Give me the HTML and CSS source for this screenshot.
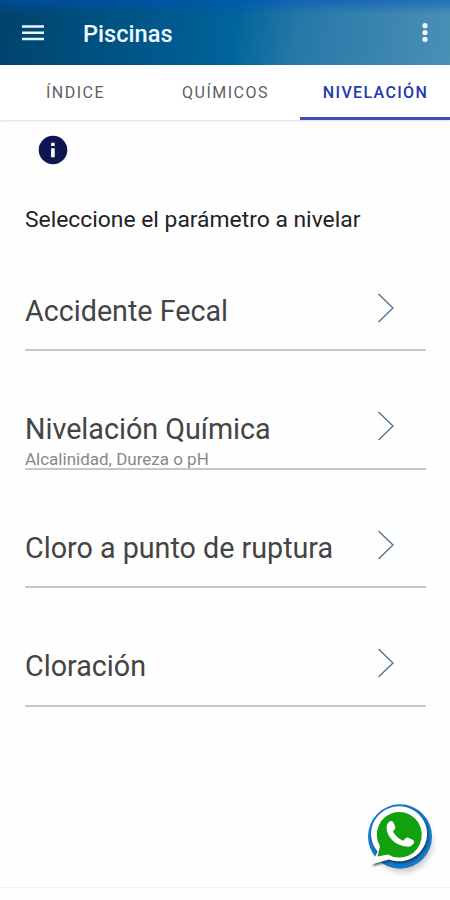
FILE: index.html
```html
<!DOCTYPE html>
<html lang="es">
<head>
  <meta charset="UTF-8" />
  <meta name="viewport" content="width=device-width, initial-scale=1.0" />
  <title>Piscinas</title>
  <link rel="stylesheet" href="styles.css">
</head>
<body>
  <header class="app-bar">
    <svg class="menu-icon" width="22" height="16" viewBox="0 0 22 16">
      <path d="M0 1.5h22M0 7.8h22M0 14h22" stroke="#e9f3fa" stroke-width="2.4"/>
    </svg>
    <h1>Piscinas</h1>
    <svg class="more-icon" width="6" height="20" viewBox="0 0 6 20" fill="#f1f7fa">
      <circle cx="3" cy="2.7" r="2.6"/>
      <circle cx="3" cy="9.5" r="2.6"/>
      <circle cx="3" cy="16.3" r="2.6"/>
    </svg>
  </header>

  <nav class="tabs">
    <a class="tab"><span>ÍNDICE</span></a>
    <a class="tab"><span>QUÍMICOS</span></a>
    <a class="tab active"><span>NIVELACIÓN</span></a>
  </nav>

  <main class="content">
    <svg class="info-icon" width="30" height="30" viewBox="0 0 30 30">
      <circle cx="15" cy="15" r="14.3" fill="#0d1650"/>
      <path d="M13.1 7.8h3.6v3.3h-3.6zM13.1 13.2h3.6v9h-3.6z" fill="#fff"/>
    </svg>
    <p class="prompt">Seleccione el parámetro a nivelar</p>

    <div class="list">
      <div class="item">
        <div class="item-title">Accidente Fecal</div>
        <svg class="chevron" width="18" height="30" viewBox="0 0 18 30"><path d="M1.5 1l14.5 14L1.5 29"/></svg>
      </div>
      <div class="item">
        <div class="item-title">Nivelación Química</div>
        <div class="item-sub">Alcalinidad, Dureza o pH</div>
        <svg class="chevron" width="18" height="30" viewBox="0 0 18 30"><path d="M1.5 1l14.5 14L1.5 29"/></svg>
      </div>
      <div class="item">
        <div class="item-title">Cloro a punto de ruptura</div>
        <svg class="chevron" width="18" height="30" viewBox="0 0 18 30"><path d="M1.5 1l14.5 14L1.5 29"/></svg>
      </div>
      <div class="item">
        <div class="item-title">Cloración</div>
        <svg class="chevron" width="18" height="30" viewBox="0 0 18 30"><path d="M1.5 1l14.5 14L1.5 29"/></svg>
      </div>
    </div>
  </main>

  <a class="whatsapp">
    <svg width="80" height="80" viewBox="0 0 80 80">
      <defs>
        <filter id="soft" x="-30%" y="-30%" width="160%" height="160%"><feGaussianBlur stdDeviation="3"/></filter>
        <filter id="edge" x="-30%" y="-30%" width="160%" height="160%"><feGaussianBlur stdDeviation="1"/></filter>
        <path id="bubble" d="M11 64.5L17.1 51.5A28 27.500 0 1 1 28.500 59.500Z"/>
      </defs>
      <circle cx="43" cy="43" r="29" fill="#000" opacity=".22" filter="url(#soft)"/>
      <ellipse cx="40" cy="36.5" rx="32" ry="32.3" fill="#1678cc"/>
      <use href="#bubble" x="1.5" y="1.8" fill="#123" opacity=".7" filter="url(#edge)"/>
      <use href="#bubble" x="0.5" fill="#fff"/>
      <path d="M17.5 56.5L20 46.5A22.5 22.8 0 1 1 28 54.5Z" fill="#11a010"/>
      <path d="M29.5 21.5q2.800-1.500 4 1l1.700 4.200q.6 1.700-.8 3l-1.500 1.700q3.400 6.200 10.200 9.300l2.500-2.500q1.200-1.100 2.700-.4l4.800 2.300q1.700.9.800 3-2.300 4.200-7.500 3.500Q31.500 44.500 27 31.500q-1.600-6.800 2.500-10z" fill="#fff"/>
    </svg>
  </a>
  <footer class="bottom-bar"></footer>
</body>
</html>
```
FILE: styles.css
```css
* { box-sizing: border-box; }
body {
  margin: 0;
  height: 900px;
  display: flex;
  flex-direction: column;
  font-family: Roboto, sans-serif;
  background-color: #fefefe;
  overflow: hidden;
}
.app-bar {
  height: 64.5px;
  flex: none;
  display: flex;
  align-items: center;
  padding: 1px 22px 0;
  background:
    linear-gradient(to bottom, rgba(0, 80, 190, 0.5), rgba(0, 80, 190, 0) 14px),
    linear-gradient(100deg, #00436c 0%, #005c92 42%, #00659b 52%, #2778a8 66%, #4a90b5 100%);
  color: #f1f8fd;
}
.app-bar h1 {
  margin: 3px 0 0 39px;
  font-size: 23.6px;
  font-weight: 500;
}
.more-icon {
  margin-left: auto;
}
.tabs {
  height: 55px;
  flex: none;
  display: flex;
  background-color: #fff;
  box-shadow: 0 1px 2px rgba(0, 0, 0, 0.14);
}
.tab {
  flex: 1;
  display: flex;
  align-items: center;
  justify-content: center;
  padding: 4px 0 0 1px;
  border-bottom: 3px solid transparent;
  font-size: 16px;
  font-weight: 400;
  letter-spacing: 1.5px;
  color: #606060;
}
.tab.active {
  font-weight: 500;
  letter-spacing: 1.35px;
  color: #2339ae;
  border-bottom-color: #3d51b2;
}
.content {
  flex: 1;
  padding: 15.5px 24px 0 25px;
}
.info-icon {
  display: block;
  margin-left: 13px;
}
.prompt {
  margin: 40px 0 0;
  font-size: 22.85px;
  line-height: 30px;
  color: #222;
  white-space: nowrap;
}
.list {
  margin-top: -2px;
}
.item {
  position: relative;
  height: 118.4px;
  padding-top: 60px;
  border-bottom: 2px solid #c6c6c6;
}
.item-title {
  font-size: 28.7px;
  line-height: 36px;
  color: #444;
  white-space: nowrap;
}
.item-sub {
  font-size: 17px;
  line-height: 20px;
  margin-top: 2px;
  color: #888;
}
.chevron {
  position: absolute;
  right: 31px;
  top: 60px;
  fill: none;
  stroke: #50779a;
  stroke-width: 1.4;
}
.whatsapp {
  position: absolute;
  left: 360px;
  top: 800px;
}
.bottom-bar {
  height: 13px;
  flex: none;
  border-top: 1px solid #f3f3f3;
}
```
